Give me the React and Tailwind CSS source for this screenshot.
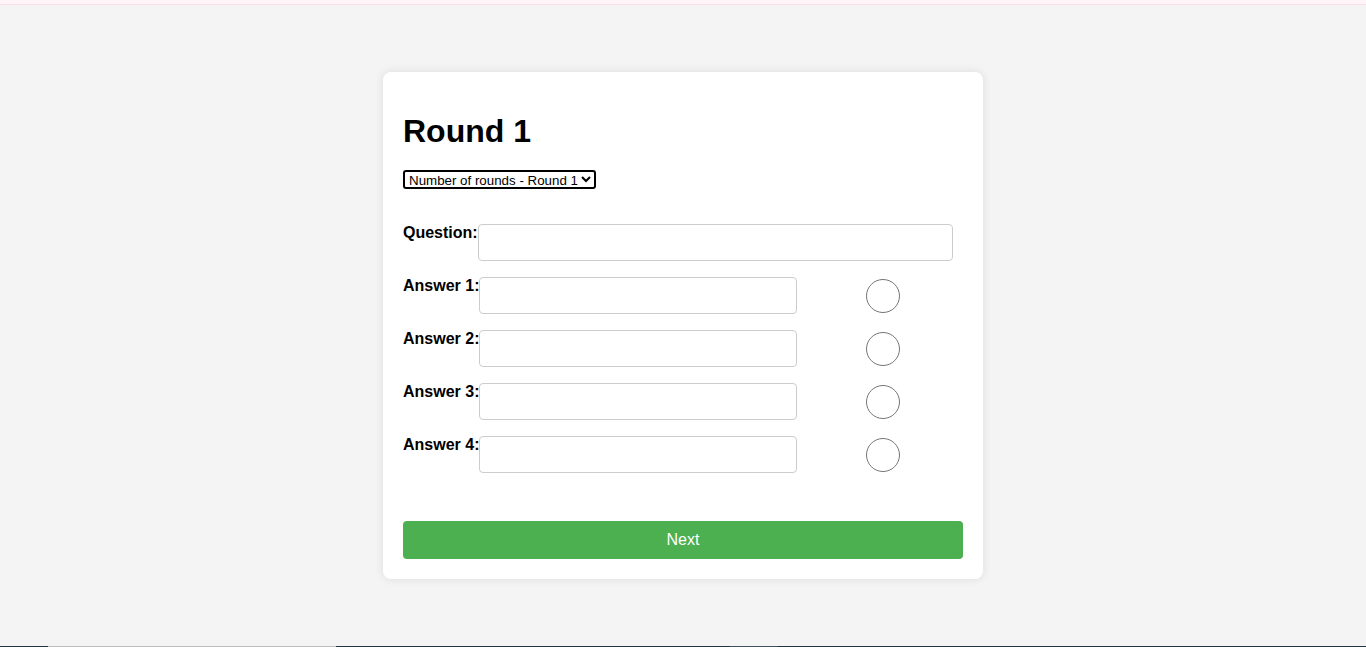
import { useState } from 'react';

const answers = [1, 2, 3, 4];

function Row({ label, children }) {
  return (
    <div className="flex items-start">
      <label className="shrink-0 text-base font-bold leading-[18px]">{label}</label>
      {children}
    </div>
  );
}

export default function App() {
  const [correct, setCorrect] = useState(null);

  return (
    <div
      className="flex h-[647px] flex-col bg-[#f4f4f4] text-black"
      style={{ fontFamily: '"Liberation Sans", Arial, sans-serif' }}
    >
      <div className="h-[5px] shrink-0 border-b border-[#fbdde7] bg-[#fff5f8]" />

      <main className="flex-1">
        <div className="mx-auto mt-[67px] w-[600px] rounded-lg bg-white p-5 shadow-[0_0_10px_rgba(0,0,0,0.1)]">
          <h1 className="mt-[21px] text-[32px] font-bold leading-[37px]">Round 1</h1>

          <select className="mt-[20px] h-[19px] rounded-[3px] border-2 border-black bg-white text-[13.33px] leading-none">
            <option>Number of rounds - Round 1</option>
            <option>Number of rounds - Round 2</option>
            <option>Number of rounds - Round 3</option>
          </select>

          <div className="mt-[32px] flex flex-col gap-4">
            <Row label="Question:">
              <input
                type="text"
                className="h-[37px] w-[475px] rounded border border-[#cccccc] px-2 text-base outline-none"
              />
            </Row>
            {answers.map((n) => (
              <Row key={n} label={`Answer ${n}:`}>
                <input
                  type="text"
                  className="h-[37px] w-[318px] rounded border border-[#cccccc] px-2 text-base outline-none"
                />
                <button
                  type="button"
                  onClick={() => setCorrect(n)}
                  className="ml-[69px] mt-[2px] flex h-[34px] w-[34px] items-center justify-center rounded-full border border-[#767676] bg-white"
                >
                  {correct === n && <span className="h-[22px] w-[22px] rounded-full bg-[#0075ff]" />}
                </button>
              </Row>
            ))}
          </div>

          <button
            type="button"
            className="mt-12 h-[38px] w-full rounded bg-[#4caf50] text-base text-white"
          >
            Next
          </button>
        </div>
      </main>

      <div className="flex h-px shrink-0">
        <div className="w-[48px] bg-[#1e3640]" />
        <div className="w-[288px] bg-[#bdbdbd]" />
        <div className="w-[394px] bg-[#1e3640]" />
        <div className="w-[48px] bg-[#3f555e]" />
        <div className="flex-1 bg-[#1e3640]" />
      </div>
    </div>
  );
}
